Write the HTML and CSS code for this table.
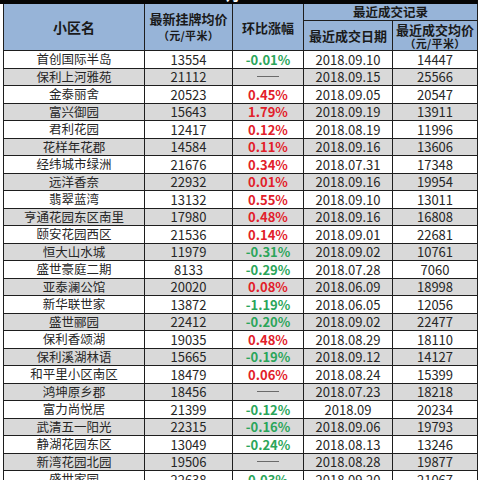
FILE: index.html
```html
<!DOCTYPE html>
<html lang="zh-CN">
<head>
<meta charset="utf-8">
<title>小区挂牌均价</title>
<link rel="stylesheet" href="styles.css">
</head>
<body>
<div class="topbar"><span class="topbar-text">9月</span></div>
<div class="sheet">
  <div class="hd span-rows name-hd">小区名</div>
  <div class="hd span-rows"><div class="two wide"><span>最新挂牌均价</span><span class="unit">（元/平米）</span></div></div>
  <div class="hd span-rows">环比涨幅</div>
  <div class="hd span-cols group-hd">最近成交记录</div>
  <div class="hd">最近成交日期</div>
  <div class="hd"><div class="two tight"><span>最近成交均价</span><span class="unit">（元/平米）</span></div></div>

  <div class="row"><div class="nm">首创国际半岛</div><div>13554</div><div class="dn">-0.01%</div><div>2018.09.10</div><div>14447</div></div>
  <div class="row alt"><div class="nm">保利上河雅苑</div><div>21112</div><div><span class="dash"></span></div><div>2018.09.15</div><div>25566</div></div>
  <div class="row"><div class="nm">金泰丽舍</div><div>20523</div><div class="up">0.45%</div><div>2018.09.05</div><div>20547</div></div>
  <div class="row alt"><div class="nm">富兴御园</div><div>15643</div><div class="up">1.79%</div><div>2018.09.19</div><div>13911</div></div>
  <div class="row"><div class="nm">君利花园</div><div>12417</div><div class="up">0.12%</div><div>2018.08.19</div><div>11996</div></div>
  <div class="row alt"><div class="nm">花样年花郡</div><div>14584</div><div class="up">0.11%</div><div>2018.09.16</div><div>13606</div></div>
  <div class="row"><div class="nm">经纬城市绿洲</div><div>21676</div><div class="up">0.34%</div><div>2018.07.31</div><div>17348</div></div>
  <div class="row alt"><div class="nm">远洋香奈</div><div>22932</div><div class="up">0.01%</div><div>2018.09.16</div><div>19954</div></div>
  <div class="row"><div class="nm">翡翠蓝湾</div><div>13132</div><div class="up">0.55%</div><div>2018.09.10</div><div>13011</div></div>
  <div class="row alt"><div class="nm">亨通花园东区南里</div><div>17980</div><div class="up">0.48%</div><div>2018.09.16</div><div>16808</div></div>
  <div class="row"><div class="nm">颐安花园西区</div><div>21536</div><div class="up">0.14%</div><div>2018.09.01</div><div>22681</div></div>
  <div class="row alt"><div class="nm">恒大山水城</div><div>11979</div><div class="dn">-0.31%</div><div>2018.09.02</div><div>10761</div></div>
  <div class="row"><div class="nm">盛世豪庭二期</div><div>8133</div><div class="dn">-0.29%</div><div>2018.07.28</div><div>7060</div></div>
  <div class="row alt"><div class="nm">亚泰澜公馆</div><div>20020</div><div class="up">0.08%</div><div>2018.06.09</div><div>18998</div></div>
  <div class="row"><div class="nm">新华联世家</div><div>13872</div><div class="dn">-1.19%</div><div>2018.06.05</div><div>12056</div></div>
  <div class="row alt"><div class="nm">盛世郦园</div><div>22412</div><div class="dn">-0.20%</div><div>2018.09.02</div><div>22477</div></div>
  <div class="row"><div class="nm">保利香颂湖</div><div>19035</div><div class="up">0.48%</div><div>2018.08.29</div><div>18110</div></div>
  <div class="row alt"><div class="nm">保利溪湖林语</div><div>15665</div><div class="dn">-0.19%</div><div>2018.09.12</div><div>14127</div></div>
  <div class="row"><div class="nm">和平里小区南区</div><div>18479</div><div class="up">0.06%</div><div>2018.08.24</div><div>15399</div></div>
  <div class="row alt"><div class="nm">鸿坤原乡郡</div><div>18456</div><div><span class="dash"></span></div><div>2018.07.23</div><div>18218</div></div>
  <div class="row"><div class="nm">富力尚悦居</div><div>21399</div><div class="dn">-0.12%</div><div>2018.09</div><div>20234</div></div>
  <div class="row alt"><div class="nm">武清五一阳光</div><div>22315</div><div class="dn">-0.16%</div><div>2018.09.06</div><div>19793</div></div>
  <div class="row"><div class="nm">静湖花园东区</div><div>13049</div><div class="dn">-0.24%</div><div>2018.08.13</div><div>13246</div></div>
  <div class="row alt"><div class="nm">新湾花园北园</div><div>19506</div><div><span class="dash"></span></div><div>2018.08.28</div><div>19877</div></div>
  <div class="row"><div class="nm">盛世家园</div><div>22638</div><div class="dn">0.03%</div><div>2018.09.20</div><div>21067</div></div>
</div>
</body>
</html>
```
FILE: styles.css
```css
html, body {
  margin: 0;
  padding: 0;
  background: #ffffff;
  overflow: hidden;
}
body {
  font-family: "Noto Sans CJK SC", "Noto Sans", sans-serif;
  color: #222222;
}
.topbar {
  height: 4px;
  width: 478px;
  background: #050505;
  overflow: hidden;
  display: flex;
  justify-content: center;
}
.topbar-text {
  color: #ffffff;
  font-size: 14px;
  line-height: 14px;
  font-weight: bold;
  margin-top: -13px;
  margin-left: -20px;
}
.sheet {
  display: grid;
  grid-template-columns: 140px 87px 70px 88px 84px;
  grid-template-rows: 16px 29px;
  grid-auto-rows: 16.5px;
  gap: 1px;
  padding: 0 1px 1px 1px;
  margin-left: 3px;
  width: max-content;
  background: #1e1e1e;
}
.hd,
.row > div {
  display: flex;
  align-items: center;
  justify-content: center;
  white-space: nowrap;
}
.hd {
  background: #97b4d8;
  font-weight: bold;
  font-size: 13px;
  color: #1a1a1a;
  line-height: 1;
}
.name-hd {
  font-size: 14px;
}
.group-hd {
  font-size: 12.5px;
}
.span-rows {
  grid-row: span 2;
}
.span-cols {
  grid-column: span 2;
}
.two {
  display: flex;
  flex-direction: column;
  align-items: center;
}
.two.wide {
  gap: 5px;
  margin-top: -2px;
}
.two.tight {
  gap: 2px;
}
.unit {
  font-size: 11px;
  letter-spacing: 0.3px;
}
.row {
  display: contents;
}
.row > div {
  background: #ffffff;
  font-size: 13px;
  line-height: 1;
  color: #262626;
}
.row.alt > div {
  background: #d9d9d9;
}
.row > .nm {
  font-size: 12.5px;
}
.row > .up {
  color: #e2202a;
  font-weight: bold;
}
.row > .dn {
  color: #2ba55a;
  font-weight: bold;
}
.dash {
  display: block;
  width: 22px;
  height: 1px;
  background: #6a6a6a;
}
```
